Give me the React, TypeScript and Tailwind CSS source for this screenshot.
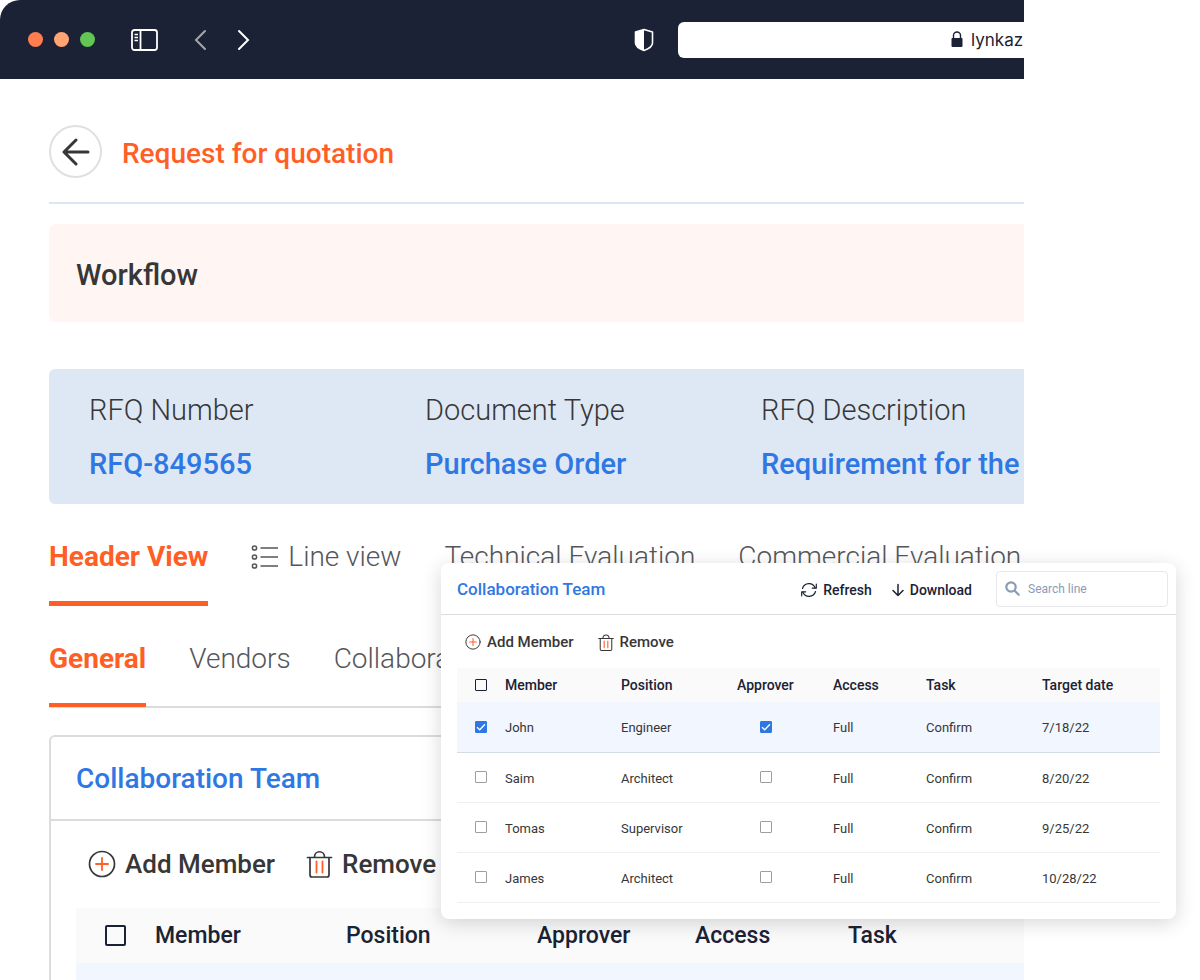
import React, { useState } from "react";
import clsx from "clsx";

interface Member {
    name: string;
    position: string;
    approver: boolean;
    access: string;
    task: string;
    date: string;
}

const members: Member[] = [
    { name: "John", position: "Engineer", approver: true, access: "Full", task: "Confirm", date: "7/18/22" },
    { name: "Saim", position: "Architect", approver: false, access: "Full", task: "Confirm", date: "8/20/22" },
    { name: "Tomas", position: "Supervisor", approver: false, access: "Full", task: "Confirm", date: "9/25/22" },
    { name: "James", position: "Architect", approver: false, access: "Full", task: "Confirm", date: "10/28/22" },
];

const details = [
    { label: "RFQ Number", value: "RFQ-849565" },
    { label: "Document Type", value: "Purchase Order" },
    { label: "RFQ Description", value: "Requirement for the" },
];

export default function App() {
    return (
        <div className="relative h-screen overflow-hidden bg-white font-['Roboto',sans-serif] text-[#373737]">
            <div className="mr-44 h-full overflow-hidden rounded-tl-[20px] whitespace-nowrap">
                <BrowserBar />
                <main className="pl-[49px]">
                    <header className="mt-[46px] flex items-center gap-5">
                        <button
                            aria-label="Back"
                            className="flex h-[53px] w-[53px] items-center justify-center rounded-full border-2 border-[#e0e0e0]"
                        >
                            <svg width="28" height="28" viewBox="0 0 28 28" fill="none" stroke="#373737" strokeWidth="3" strokeLinecap="round" strokeLinejoin="round">
                                <path d="M26 14H2M14 2 2 14l12 12" />
                            </svg>
                        </button>
                        <h1 className="pt-1 text-[28px] leading-9 font-medium text-[#ff5f26]">Request for quotation</h1>
                    </header>

                    <div className="mt-6 h-0.5 bg-[#dde5f0]" />

                    <section className="mt-5 flex h-[98px] items-center rounded-l-md bg-[#fff6f3] pl-[27px]">
                        <h2 className="pt-1 text-[29px] leading-9 font-medium">Workflow</h2>
                    </section>

                    <dl className="mt-[47px] flex h-[135px] items-center rounded-l-md bg-[#dee8f4] pl-10">
                        {details.map((d) => (
                            <div key={d.label} className="flex w-[336px] shrink-0 flex-col gap-[18px]">
                                <dt className="text-[29px] leading-9 font-light">{d.label}</dt>
                                <dd className="text-[29px] leading-9 font-medium text-[#2f78e4]">{d.value}</dd>
                            </div>
                        ))}
                    </dl>

                    <ViewTabs />
                    <SectionTabs />

                    <section className="mt-[27px] h-[400px] rounded-tl-md border-t-2 border-l-2 border-[#dcdcdc]">
                        <div className="flex h-[84px] items-center border-b-2 border-[#dcdcdc] pl-[25px]">
                            <h2 className="pt-0.5 text-[28px] leading-9 font-medium text-[#2f78e4]">Collaboration Team</h2>
                        </div>
                        <div className="flex h-[87px] items-center gap-[31px] pb-0.5 pl-[37px]">
                            <button className="flex items-center gap-[9px] text-[26px] leading-8 font-medium">
                                <PlusCircle className="h-7 w-7" />
                                Add Member
                            </button>
                            <button className="flex items-center gap-[9px] text-[26px] leading-8 font-medium">
                                <TrashIcon className="h-7 w-[27px]" />
                                Remove
                            </button>
                        </div>
                        <div className="pl-[25px]">
                            <PageTable />
                        </div>
                    </section>
                </main>
            </div>

            <CollaborationPanel />
        </div>
    );
}

function BrowserBar() {
    return (
        <div className="flex h-[79px] items-center bg-[#1b2235] pl-7">
            <div className="flex gap-[11px]">
                <span className="h-[15px] w-[15px] rounded-full bg-[#ff7d4f]" />
                <span className="h-[15px] w-[15px] rounded-full bg-[#ffa472]" />
                <span className="h-[15px] w-[15px] rounded-full bg-[#62c554]" />
            </div>
            <button aria-label="Toggle sidebar" className="ml-9">
                <svg width="27" height="22" viewBox="0 0 27 22" fill="none" stroke="white">
                    <rect x="1" y="1" width="25" height="20" rx="2.5" strokeWidth="1.8" />
                    <path d="M9.500 1v20" strokeWidth="1.8" />
                    <path d="M3.500 5.500h3.500M3.500 8.500h3.500M3.500 11.500h3.500" strokeWidth="1.3" />
                </svg>
            </button>
            <button aria-label="Previous page" className="ml-9">
                <svg width="13" height="22" viewBox="0 0 13 22" fill="none" stroke="#a7a7a7" strokeWidth="2" strokeLinecap="round">
                    <path d="M11 2 2 11l9 9" />
                </svg>
            </button>
            <button aria-label="Next page" className="ml-[30px]">
                <svg width="13" height="22" viewBox="0 0 13 22" fill="none" stroke="white" strokeWidth="2" strokeLinecap="round">
                    <path d="m2 2 9 9-9 9" />
                </svg>
            </button>
            <svg className="ml-auto" width="20" height="24" viewBox="0 0 20 24">
                <path d="M10 1.500 18.500 4v11c0 3-3 5.500-8.500 7.500C4.500 20.500 1.500 18 1.500 15V4z" fill="none" stroke="white" strokeWidth="1.600" strokeLinejoin="round" />
                <path d="M10 1.500v21C4.500 20.500 1.500 18 1.500 15V4z" fill="white" />
            </svg>
            <label className="ml-6 flex h-9 w-[346px] items-center justify-end gap-2 rounded-l-md bg-white text-[#1b2235]">
                <svg width="12" height="17" viewBox="0 0 12 17">
                    <rect x="0.5" y="7" width="11" height="9" rx="1" fill="#1b2235" />
                    <path d="M2.500 8V4.500a3.500 3.500 0 0 1 7 0V8" fill="none" stroke="#1b2235" strokeWidth="1.400" />
                </svg>
                <input
                    aria-label="Address"
                    defaultValue="lynkaz"
                    className="w-[53px] bg-transparent font-['Inter',sans-serif] text-[17px] leading-6 outline-none"
                />
            </label>
        </div>
    );
}

function ViewTabs() {
    return (
        <nav className="flex h-[102px] items-stretch gap-[43px] text-[28px] leading-9 font-light text-[#55565a]">
            <button className="flex items-center border-b-[5px] border-[#ff5f26] pt-[9px] font-bold text-[#ff5f26]">Header View</button>
            <button className="flex items-center gap-[9px] pt-1">
                <svg width="28" height="24" viewBox="0 0 28 24" fill="none" stroke="#55565a" strokeWidth="1.500">
                    <circle cx="3.500" cy="3" r="2.100" />
                    <circle cx="3.500" cy="12" r="2.100" />
                    <circle cx="3.500" cy="21" r="2.100" />
                    <path d="M9.500 3H27M9.500 12H27M9.500 21H27" />
                </svg>
                Line view
            </button>
            <button className="flex items-center pt-1">Technical Evaluation</button>
            <button className="flex items-center pt-1">Commercial Evaluation</button>
        </nav>
    );
}

function SectionTabs() {
    return (
        <nav className="flex h-[102px] items-stretch gap-[43px] border-b-2 border-[#dcdcdc] text-[28px] leading-9 font-light text-[#55565a]">
            <button className="-mb-px flex items-center border-b-4 border-[#ff5f26] pt-[9px] font-bold text-[#ff5f26]">General</button>
            <button className="flex items-center pt-[6px]">Vendors</button>
            <button className="flex items-center pt-[6px]">Collaboration</button>
        </nav>
    );
}

function PageTable() {
    return (
        <table className="w-full table-fixed text-left text-[23px] leading-8 text-[#1b2235]">
            <colgroup>
                <col className="w-[79px]" />
                <col className="w-[191px]" />
                <col className="w-[191px]" />
                <col className="w-[158px]" />
                <col className="w-[153px]" />
                <col />
            </colgroup>
            <thead>
                <tr className="h-[55px] bg-[#f9faf9]">
                    <th className="pl-[29px]">
                        <input
                            type="checkbox"
                            aria-label="Select all members"
                            className="block h-[21px] w-[21px] appearance-none rounded-xs border-2 border-[#1b2235]"
                        />
                    </th>
                    <th className="font-medium">Member</th>
                    <th className="font-medium">Position</th>
                    <th className="font-medium">Approver</th>
                    <th className="font-medium">Access</th>
                    <th className="font-medium">Task</th>
                </tr>
            </thead>
            <tbody>
                <tr className="h-20 bg-[#f1f6ff]">
                    <td colSpan={6} />
                </tr>
            </tbody>
        </table>
    );
}

function CollaborationPanel() {
    const [selected, setSelected] = useState<string[]>(["John"]);

    const toggle = (name: string) => {
        setSelected((prev) => (prev.includes(name) ? prev.filter((n) => n !== name) : [...prev, name]));
    };

    return (
        <section className="absolute top-[563px] right-6 w-[735px] rounded-lg bg-white pb-4 whitespace-nowrap shadow-[0_4px_20px_rgba(0,0,0,0.16)]">
            <div className="flex h-[52px] items-center border-b border-[#dcdcdc] pr-2 pl-4">
                <h2 className="text-[17px] leading-6 font-medium text-[#2f78e4]">Collaboration Team</h2>
                <div className="ml-auto flex items-center gap-5 pt-0.5 text-sm font-medium text-[#1b2235]">
                    <button className="flex items-center gap-1.5">
                        <svg width="16" height="16" viewBox="0 0 16 16" fill="none" stroke="#1b2235" strokeWidth="1.200" strokeLinecap="round" strokeLinejoin="round">
                            <path d="M1.500 6.500A6.700 6.700 0 0 1 14.200 6M14.500 9.500A6.700 6.700 0 0 1 1.800 10" />
                            <path d="M15.300 2.200V6.200H11.300M.700 13.800V9.800H4.700" />
                        </svg>
                        Refresh
                    </button>
                    <button className="flex items-center gap-1.5">
                        <svg width="12" height="14" viewBox="0 0 12 14" fill="none" stroke="#1b2235" strokeWidth="1.500" strokeLinecap="round" strokeLinejoin="round">
                            <path d="M6 1.500v11M1 7.500l5 5 5-5" />
                        </svg>
                        Download
                    </button>
                </div>
                <label className="ml-6 flex h-9 w-[172px] items-center gap-2 rounded border border-[#e8e8ea] px-2">
                    <svg className="shrink-0" width="15" height="15" viewBox="0 0 15 15" fill="none" stroke="#8a9bb8" strokeWidth="2.200" strokeLinecap="round">
                        <circle cx="6" cy="6" r="4.700" />
                        <path d="m9.700 9.700 4 4" />
                    </svg>
                    <input
                        aria-label="Search line"
                        placeholder="Search line"
                        className="w-full min-w-0 text-xs outline-none placeholder:text-[#8a9bb8]"
                    />
                </label>
            </div>

            <div className="flex h-[53px] items-center gap-6 pt-px pl-6 text-[15px] font-medium">
                <button className="flex items-center gap-1.5">
                    <PlusCircle className="h-4 w-4" />
                    Add Member
                </button>
                <button className="flex items-center gap-1.5">
                    <TrashIcon className="h-[17px] w-4" />
                    Remove
                </button>
            </div>

            <div className="px-4">
                <table className="w-full table-fixed text-left text-[13px] leading-5">
                    <colgroup>
                        <col className="w-12" />
                        <col className="w-[116px]" />
                        <col className="w-[116px]" />
                        <col className="w-24" />
                        <col className="w-[93px]" />
                        <col className="w-[116px]" />
                        <col />
                    </colgroup>
                    <thead>
                        <tr className="h-[34px] bg-[#f9faf9] text-sm text-[#1b2235]">
                            <th className="pl-[18px]">
                                <Checkbox label="Select all" dark checked={false} />
                            </th>
                            <th className="font-medium">Member</th>
                            <th className="font-medium">Position</th>
                            <th className="font-medium">Approver</th>
                            <th className="font-medium">Access</th>
                            <th className="font-medium">Task</th>
                            <th className="font-medium">Target date</th>
                        </tr>
                    </thead>
                    <tbody>
                        {members.map((m) => (
                            <tr
                                key={m.name}
                                className={clsx(
                                    "h-[50px] border-b",
                                    selected.includes(m.name) ? "border-[#d5dbe2] bg-[#f1f6ff]" : "border-[#eeeff0]"
                                )}
                            >
                                <td className="pl-[18px]">
                                    <Checkbox label={m.name} checked={selected.includes(m.name)} onChange={() => toggle(m.name)} />
                                </td>
                                <td className="pt-[3px]">{m.name}</td>
                                <td className="pt-[3px]">{m.position}</td>
                                <td className="pl-[23px]">
                                    <Checkbox label={`${m.name} approver`} checked={m.approver} />
                                </td>
                                <td className="pt-[3px]">{m.access}</td>
                                <td className="pt-[3px]">{m.task}</td>
                                <td className="pt-[3px]">{m.date}</td>
                            </tr>
                        ))}
                    </tbody>
                </table>
            </div>
        </section>
    );
}

function Checkbox({ label, checked, dark, onChange }: { label: string; checked: boolean; dark?: boolean; onChange?: () => void }) {
    return (
        <span className="grid h-3 w-3">
            <input
                type="checkbox"
                aria-label={label}
                checked={checked}
                onChange={onChange ?? (() => { })}
                className={clsx(
                    "col-start-1 row-start-1 h-3 w-3 appearance-none rounded-[1px] border checked:border-[#2f78e4] checked:bg-[#2f78e4]",
                    dark ? "border-[#1b2235]" : "border-[#9c9ea3]"
                )}
            />
            {checked && (
                <svg className="pointer-events-none col-start-1 row-start-1" width="12" height="12" viewBox="0 0 12 12" fill="none" stroke="white" strokeWidth="1.300">
                    <path d="M2 6.200 4.700 8.800 10 3.200" />
                </svg>
            )}
        </span>
    );
}

function PlusCircle({ className }: { className: string }) {
    return (
        <svg className={className} viewBox="0 0 28 28" fill="none" strokeLinecap="round">
            <circle cx="14" cy="14" r="12.500" stroke="#373737" strokeWidth="1.700" />
            <path d="M14 8v12M8 14h12" stroke="#ff5f26" strokeWidth="1.800" />
        </svg>
    );
}

function TrashIcon({ className }: { className: string }) {
    return (
        <svg className={className} viewBox="0 0 26 28" fill="none" strokeLinecap="round">
            <path d="M1 7.500h24M3.500 7.500v17.500a2 2 0 0 0 2 2h15a2 2 0 0 0 2-2V7.500M8 7c0-7 10-7 10 0" stroke="#373737" strokeWidth="1.700" />
            <path d="M10 11.500v11M16 11.500v11" stroke="#ff5f26" strokeWidth="1.800" />
        </svg>
    );
}
